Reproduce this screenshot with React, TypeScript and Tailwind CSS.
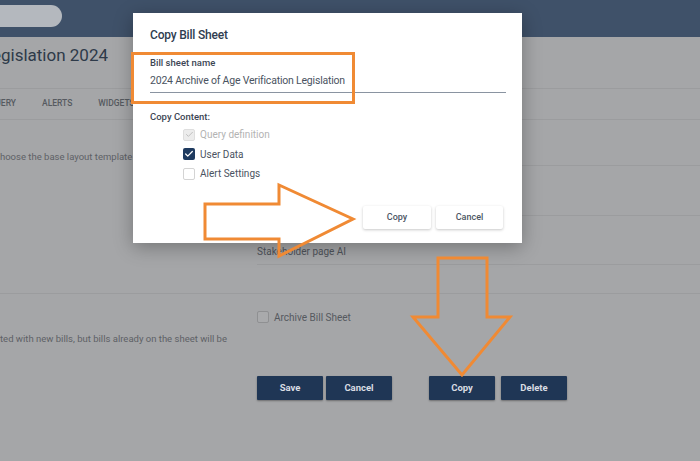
import { Check } from 'lucide-react';

function Box({ state }: { state: 'disabled' | 'checked' | 'empty' | 'dim' }) {
  if (state === 'checked') {
    return (
      <span className="w-[12px] h-[12px] rounded-[2px] bg-[#1e3a5f] flex items-center justify-center">
        <Check size={10} strokeWidth={3} className="text-white" />
      </span>
    );
  }
  if (state === 'disabled') {
    return (
      <span className="w-[12px] h-[12px] rounded-[2px] bg-[#ececec] border border-[#dedede] flex items-center justify-center">
        <Check size={9} strokeWidth={2.5} className="text-[#bdbdbd]" />
      </span>
    );
  }
  if (state === 'dim') {
    return <span className="w-[12px] h-[12px] rounded-[2px] border border-[#8f9092] bg-[#a9aaac]" />;
  }
  return <span className="w-[12px] h-[12px] rounded-[2px] border border-[#d4d4d4] bg-white" />;
}

function PageButton({ label }: { label: string }) {
  return (
    <button className="w-[66px] h-[24px] bg-[#1f3655] text-[#d9dde3] text-[9.5px] font-bold rounded-[1px] shadow-[0_1px_2px_rgba(0,0,0,0.35)]">
      {label}
    </button>
  );
}

function DialogButton({ label, width }: { label: string; width: string }) {
  return (
    <button
      className={`${width} h-[23px] bg-white text-[#4b5563] text-[9px] font-medium rounded-[2px] shadow-[0_1px_3px_rgba(0,0,0,0.22)]`}
    >
      {label}
    </button>
  );
}

export default function App() {
  return (
    <div className="relative w-[700px] h-[461px] overflow-hidden bg-[#a5a6a8] font-['Roboto',sans-serif]">
      {/* Dimmed page behind the dialog */}
      <div className="h-[37px] bg-[#3f5169] pt-[5px]">
        <div className="-ml-[20px] w-[82px] h-[22px] rounded-full bg-[#b4b8be]" />
      </div>

      <div className="h-[52px] border-b border-[#9b9c9e] pt-[8px]">
        <div className="w-[108px] overflow-hidden flex justify-end whitespace-nowrap">
          <span className="text-[17px] leading-[20px] text-[#2e3a49]">Age Verification Legislation 2024</span>
        </div>
      </div>

      <div className="h-[31px] border-b border-[#9b9c9e] pt-[9px] flex gap-[26px] text-[8.5px] leading-[10px] font-medium text-[#565a60] whitespace-nowrap">
        <div className="w-[16px] overflow-hidden flex justify-end">
          <span>QUERY</span>
        </div>
        <span>ALERTS</span>
        <span>WIDGETS</span>
      </div>

      <div className="grid grid-cols-[257px_1fr] border-b border-[#9b9c9e] h-[174px]">
        <div className="pt-[31px]">
          <div className="w-[133px] overflow-hidden whitespace-nowrap">
            <div className="-ml-[5px] text-[9.5px] leading-[11px] text-[#5e6166]">
              choose the base layout template for this bill sheet
            </div>
          </div>
        </div>
        <div>
          <div className="h-[46px] border-b border-[#9b9c9e]" />
          <div className="h-[50px] border-b border-[#9b9c9e]" />
          <div className="h-[49px] border-b border-[#9b9c9e] pt-[30px] text-[10px] leading-[12px] text-[#4f535a]">
            Stakeholder page AI
          </div>
        </div>
      </div>

      <div className="grid grid-cols-[257px_1fr]">
        <div className="pt-[39px] overflow-hidden whitespace-nowrap">
          <div className="text-[9.5px] leading-[11px] text-[#5e6166]">
            ted with new bills, but bills already on the sheet will be
          </div>
        </div>
        <div className="pt-[17px]">
          <div className="flex items-center gap-[5px] h-[12px]">
            <Box state="dim" />
            <span className="text-[10px] text-[#55595f]">Archive Bill Sheet</span>
          </div>
          <div className="mt-[53px] flex">
            <div className="flex gap-[3px]">
              <PageButton label="Save" />
              <PageButton label="Cancel" />
            </div>
            <div className="ml-[37px] flex gap-[6px]">
              <PageButton label="Copy" />
              <PageButton label="Delete" />
            </div>
          </div>
        </div>
      </div>

      {/* Dialog */}
      <div className="absolute left-[133px] top-[13px] w-[389px] h-[230px] bg-white shadow-[0_4px_18px_rgba(0,0,0,0.3)] pl-[17px] pt-[14px] pr-[16px]">
        <div className="text-[12px] leading-[16px] font-medium tracking-[-0.2px] text-[#2f3d4f]">Copy Bill Sheet</div>
        <div className="mt-[14px] text-[9.5px] leading-[12px] font-medium text-[#3d4654]">Bill sheet name</div>
        <div className="mt-[4px] pb-[3px] border-b-[1.5px] border-[#8a94a1] text-[10.5px] leading-[16px] tracking-[-0.2px] text-[#4a5361]">
          2024 Archive of Age Verification Legislation
        </div>
        <div className="mt-[18px] text-[9.5px] leading-[12px] font-medium text-[#3d4654]">Copy Content:</div>
        <div className="mt-[2px] pl-[33px] text-[10px]">
          <div className="h-[19px] flex items-center gap-[5px]">
            <Box state="disabled" />
            <span className="text-[#b3b3b3]">Query definition</span>
          </div>
          <div className="h-[20px] flex items-center gap-[5px]">
            <Box state="checked" />
            <span className="text-[#4a5361]">User Data</span>
          </div>
          <div className="h-[19px] flex items-center gap-[5px]">
            <Box state="empty" />
            <span className="text-[#4a5361]">Alert Settings</span>
          </div>
        </div>
        <div className="mt-[23px] flex justify-end gap-[5px] pr-[3px]">
          <DialogButton label="Copy" width="w-[68px]" />
          <DialogButton label="Cancel" width="w-[67px]" />
        </div>
      </div>

      {/* Annotation highlight */}
      <div className="absolute left-[131px] top-[52px] w-[224px] h-[52px] border-[3px] border-[#f08a34]" />

      {/* Annotation arrows */}
      <svg className="absolute inset-0 pointer-events-none" width="700" height="461" viewBox="0 0 700 461">
        <polygon
          points="205,204 279,204 279,185 353,219 279,256 279,239 205,239"
          fill="none"
          stroke="#f08a34"
          strokeWidth="3"
        />
        <polygon
          points="438,258 487,258 487,317 510,317 462,375 413,317 438,317"
          fill="none"
          stroke="#f08a34"
          strokeWidth="3"
        />
      </svg>
    </div>
  );
}
